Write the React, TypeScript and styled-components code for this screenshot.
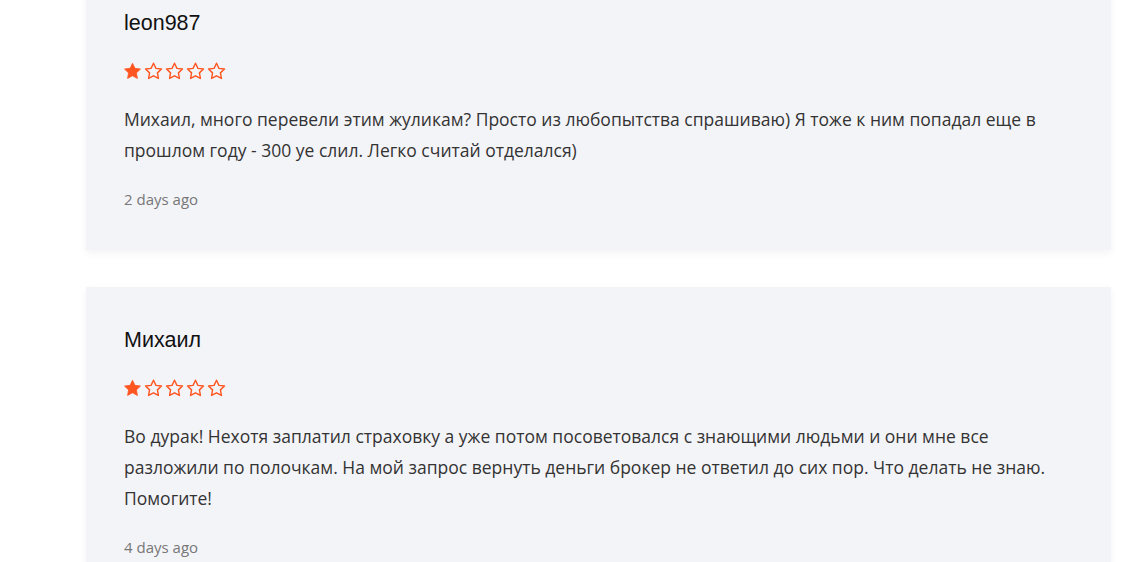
import styled, { createGlobalStyle } from "styled-components";

const GlobalStyle = createGlobalStyle`
  body {
    margin: 0;
    background: #ffffff;
    font-family: "Open Sans", "Liberation Sans", sans-serif;
    overflow: hidden;
  }
`;

type Review = {
  author: string;
  rating: number;
  text: string;
  date: string;
};

const reviews: Review[] = [
  {
    author: "leon987",
    rating: 1,
    text: "Михаил, много перевели этим жуликам? Просто из любопытства спрашиваю) Я тоже к ним попадал еще в прошлом году - 300 уе слил. Легко считай отделался)",
    date: "2 days ago",
  },
  {
    author: "Михаил",
    rating: 1,
    text: "Во дурак! Нехотя заплатил страховку а уже потом посоветовался с знающими людьми и они мне все разложили по полочкам. На мой запрос вернуть деньги брокер не ответил до сих пор. Что делать не знаю. Помогите!",
    date: "4 days ago",
  },
];

const Star = ({ filled }: { filled: boolean }) => (
  <svg width="19" height="18" viewBox="0 0 24 23">
    <path
      d="M12 1.6l3.1 6.5 7.1.9-5.2 4.9 1.3 7.1L12 17.6 5.7 21l1.3-7.1L1.8 9l7.1-.9z"
      fill={filled ? "#ff5520" : "none"}
      stroke="#ff5520"
      strokeWidth={filled ? 1 : 1.8}
      strokeLinejoin="round"
    />
  </svg>
);

export default function App() {
  return (
    <>
      <GlobalStyle />
      <List>
        {reviews.map((r, i) => (
          <Card key={i}>
            <Author>{r.author}</Author>
            <Stars>
              {[1, 2, 3, 4, 5].map((n) => (
                <Star key={n} filled={n <= r.rating} />
              ))}
            </Stars>
            <Body>{r.text}</Body>
            <DateText>{r.date}</DateText>
          </Card>
        ))}
      </List>
    </>
  );
}

const List = styled.div`
  display: flex;
  flex-direction: column;
  gap: 37px;
  margin: -30px 23px 0 86px;
`;

const Card = styled.div`
  background: #f3f4f8;
  padding: 42px 38px 41px;
  box-shadow: 0 3px 8px rgba(0, 0, 0, 0.05);
  display: flex;
  flex-direction: column;
`;

const Author = styled.div`
  font-family: "Liberation Sans", Arial, sans-serif;
  font-size: 21.5px;
  line-height: 22px;
  color: #111111;
`;

const Stars = styled.div`
  display: flex;
  gap: 2px;
  margin-top: 28px;
  margin-left: -1px;
`;

const Body = styled.p`
  margin: 24px 0 0;
  font-size: 17.5px;
  line-height: 31px;
  color: #333333;
`;

const DateText = styled.div`
  margin-top: 23px;
  font-size: 15px;
  line-height: 20px;
  color: #777777;
`;
